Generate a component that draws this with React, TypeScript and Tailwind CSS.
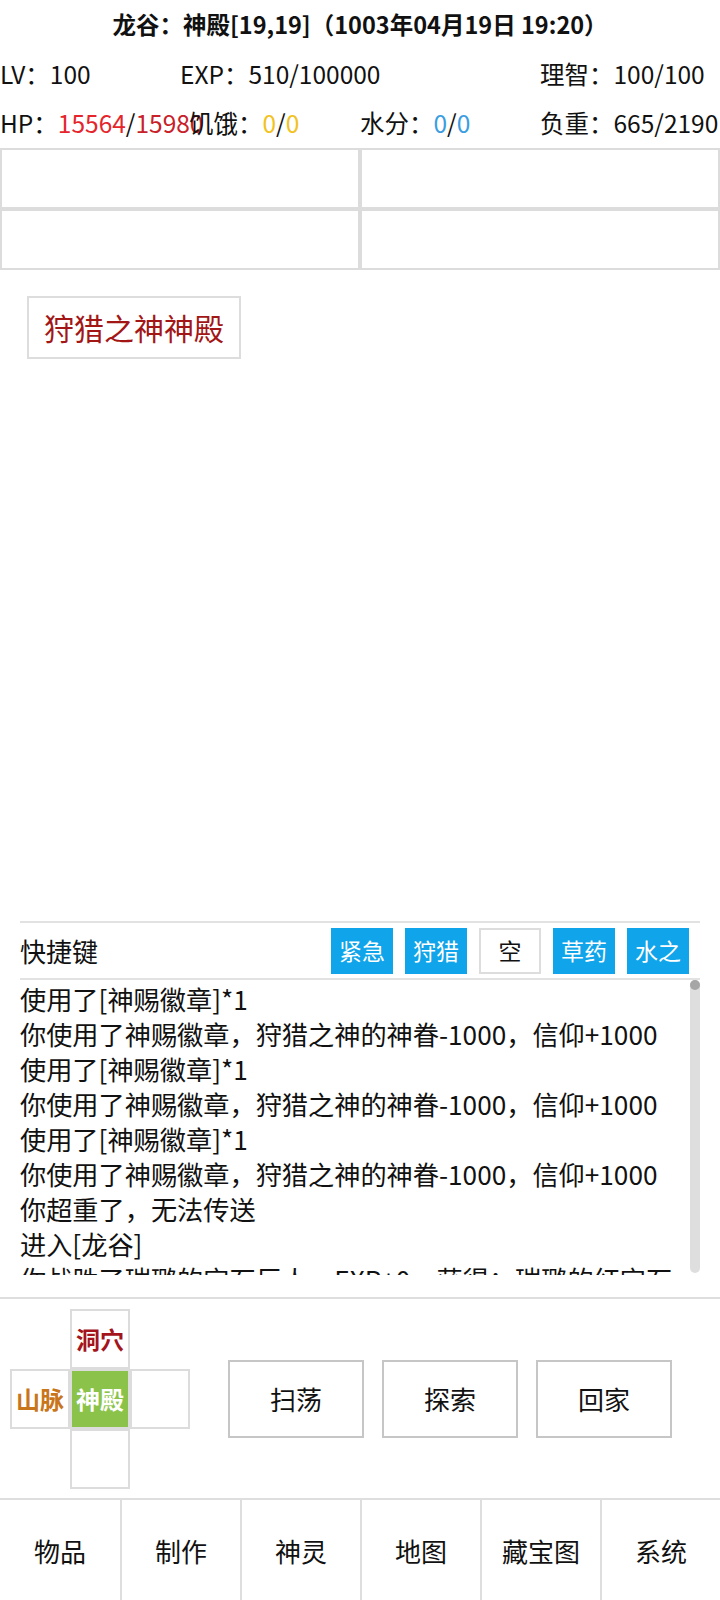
const logs = [
  "使用了[神赐徽章]*1",
  "你使用了神赐徽章，狩猎之神的神眷-1000，信仰+1000",
  "使用了[神赐徽章]*1",
  "你使用了神赐徽章，狩猎之神的神眷-1000，信仰+1000",
  "使用了[神赐徽章]*1",
  "你使用了神赐徽章，狩猎之神的神眷-1000，信仰+1000",
  "你超重了，无法传送",
  "进入[龙谷]",
  "你战胜了瑞璐的宝石巨人，EXP+0，获得：瑞璐的红宝石*1",
];

const quickKeys = [
  { label: "紧急", filled: true },
  { label: "狩猎", filled: true },
  { label: "空", filled: false },
  { label: "草药", filled: true },
  { label: "水之", filled: true },
];

const actions = ["扫荡", "探索", "回家"];
const tabs = ["物品", "制作", "神灵", "地图", "藏宝图", "系统"];

function Cell({ children, className = "" }: { children?: React.ReactNode; className?: string }) {
  return (
    <div className={`w-[60px] h-[60px] border-2 border-[#dcdcdc] flex items-center justify-center text-[24px] leading-none font-bold ${className}`}>
      {children}
    </div>
  );
}

export default function App() {
  return (
    <div className="w-[720px] h-[1600px] bg-white text-[#111] flex flex-col overflow-hidden font-['Noto_Sans_CJK_SC','Noto_Sans',sans-serif]">
      {/* header */}
      <div className="h-[50px] flex items-center justify-center text-[23.5px] font-bold">
        龙谷：神殿[19,19]（1003年04月19日 19:20）
      </div>
      <div className="h-[48px] grid grid-cols-4 items-center text-[24.5px] whitespace-nowrap">
        <div>LV：100</div>
        <div className="col-span-2">EXP：510/100000</div>
        <div>理智：100/100</div>
      </div>
      <div className="h-[50px] grid grid-cols-4 items-center text-[24.5px] whitespace-nowrap">
        <div>
          HP：<span className="text-[#e5252b]">15564</span>/<span className="text-[#c8212a]">15980</span>
        </div>
        <div className="pl-[9px]">
          饥饿：<span className="text-[#f2c21e]">0</span>/<span className="text-[#f2c21e]">0</span>
        </div>
        <div>
          水分：<span className="text-[#3a9de2]">0</span>/<span className="text-[#3a9de2]">0</span>
        </div>
        <div>负重：665/2190</div>
      </div>

      {/* slots */}
      <div className="grid grid-cols-2">
        <div className="h-[61px] border-2 border-[#dcdcdc]" />
        <div className="h-[61px] border-2 border-[#dcdcdc]" />
        <div className="h-[61px] border-2 border-[#dcdcdc]" />
        <div className="h-[61px] border-2 border-[#dcdcdc]" />
      </div>

      <div className="pt-[26px] pl-[27px]">
        <button className="w-[214px] h-[63px] border-2 border-[#dddddd] text-[30px] text-[#a31616] bg-white">
          狩猎之神神殿
        </button>
      </div>

      <div className="flex-1" />

      {/* quick keys */}
      <div className="mx-[20px] h-[59px] border-y-2 border-[#e2e2e2] flex items-center justify-between pr-[11px]">
        <div className="text-[26px]">快捷键</div>
        <div className="flex gap-[12px]">
          {quickKeys.map((k, i) => (
            <div
              key={i}
              className={
                k.filled
                  ? "w-[62px] h-[46px] bg-[#10a4ea] text-white text-[23px] flex items-center justify-center"
                  : "w-[62px] h-[46px] bg-white border-2 border-[#dddddd] text-[23px] flex items-center justify-center"
              }
            >
              {k.label}
            </div>
          ))}
        </div>
      </div>

      {/* log */}
      <div className="relative h-[295px] overflow-hidden px-[20px]">
        <div className="pt-[2px] pr-[15px] text-[26.2px] leading-[35px]">
          {logs.map((l, i) => (
            <div key={i}>{l}</div>
          ))}
        </div>
        <div className="absolute right-[20px] top-0 bottom-[2px] w-[10px] rounded-[5px] bg-[#dedede]">
          <div className="w-[10px] h-[10px] rounded-full bg-[#a6a6a6]" />
        </div>
      </div>

      <div className="mt-[22px] border-t-2 border-[#dedede]" />

      {/* map + actions */}
      <div className="h-[199px] flex items-center pl-[10px]">
        <div className="grid grid-cols-[60px_60px_60px]">
          <div />
          <Cell className="text-[#a3141c]">洞穴</Cell>
          <div />
          <Cell className="text-[#c9761b]">山脉</Cell>
          <Cell className="bg-[#8bc34a] text-white">神殿</Cell>
          <Cell />
          <div />
          <Cell />
          <div />
        </div>
        <div className="ml-[38px] flex gap-[18px]">
          {actions.map((a) => (
            <button key={a} className="w-[136px] h-[78px] border-2 border-[#c6c6c6] bg-white text-[26px]">
              {a}
            </button>
          ))}
        </div>
      </div>

      {/* nav */}
      <div className="h-[102px] border-t-2 border-[#dedede] grid grid-cols-6">
        {tabs.map((t, i) => (
          <div
            key={t}
            className={`flex items-center justify-center text-[26px] ${i > 0 ? "border-l-2 border-[#dedede]" : ""}`}
          >
            {t}
          </div>
        ))}
      </div>
    </div>
  );
}
